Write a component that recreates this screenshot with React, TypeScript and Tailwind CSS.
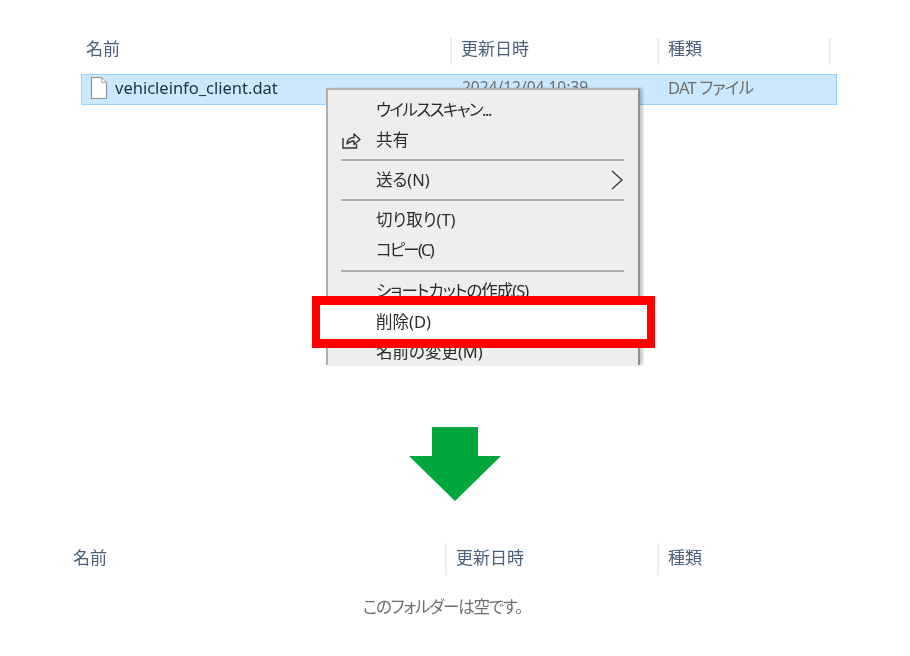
const font = "font-['Noto_Sans','Noto_Sans_CJK_JP',sans-serif] [font-feature-settings:'palt']";
const soft = 'blur-[0.4px]';

function HeaderCell({ label, className }: { label: string; className: string }) {
  return (
    <div className={`flex items-center h-full border-r-2 border-[#ececec] text-[#4c607a] text-[17px] ${className}`}>
      <span className={soft}>{label}</span>
    </div>
  );
}

function FileIcon() {
  return (
    <svg width="18" height="24" viewBox="0 0 18 24" className={`shrink-0 mb-[3px] ${soft}`}>
      <path d="M1.500 1.500h10l5 5v16h-15z" fill="#fff" stroke="#8f8f8f" strokeWidth="1.200" />
      <path d="M11.500 1.500v5h5" fill="#efefef" stroke="#b0b0b0" strokeWidth="1" />
    </svg>
  );
}

function ShareIcon() {
  return (
    <svg width="21" height="20" viewBox="0 0 20 20" fill="none" stroke="#333" strokeWidth="1.400" className={soft}>
      <path d="M1.500 8v10h13.500v-4" />
      <path d="M5.500 14c0-4.500 3-6.500 7-6.500v-3.500l6 5.500-6 5v-3.500c-3 0-5 1-7 3z" strokeLinejoin="round" />
    </svg>
  );
}

function MenuItem({ label, h = 'h-[30px]', track = '', icon, arrow }: { label: string; h?: string; track?: string; icon?: boolean; arrow?: boolean }) {
  return (
    <div className={`flex items-center ${h} text-[#2b2b2b] text-[16.5px] leading-none`}>
      <div className="w-[48px] pl-[13px] shrink-0 flex items-center">{icon && <ShareIcon />}</div>
      <span className={`flex-1 whitespace-nowrap ${track} ${soft}`}>{label}</span>
      {arrow && (
        <svg width="14" height="22" viewBox="0 0 14 22" fill="none" stroke="#444" strokeWidth="1.500" className={`mr-[14px] ${soft}`}>
          <path d="M2 2l10 9-10 9" />
        </svg>
      )}
    </div>
  );
}

function Separator() {
  return <div className="h-[2px] bg-[#adadad] ml-[13px] mr-[14px] my-[4px]" />;
}

function ContextMenu() {
  return (
    <div className="absolute left-[326px] top-[88px] w-[314px] h-[277px] overflow-hidden bg-[#eeeeee] border-l-2 border-t-2 border-[#b0b0b0] border-r-2 border-r-[#909090] pt-[5px] shadow-[3px_0_2px_rgba(0,0,0,0.2)]">
      <MenuItem label="ウイルススキャン..." track="tracking-[-1.500px]" />
      <MenuItem label="共有" icon />
      <Separator />
      <MenuItem label="送る(N)" arrow />
      <Separator />
      <MenuItem label="切り取り(T)" />
      <MenuItem label="コピー(C)" h="h-[31px]" track="tracking-[-1.800px]" />
      <Separator />
      <MenuItem label="ショートカットの作成(S)" track="tracking-[-1px]" />
      <MenuItem label="削除(D)" h="h-[31px]" />
      <MenuItem label="名前の変更(M)" h="h-[31px]" />
    </div>
  );
}

export default function App() {
  return (
    <div className={`relative w-[910px] h-[656px] bg-white overflow-hidden ${font}`}>
      {/* Before */}
      <div className="pt-[38px] pl-[81px] w-[837px]">
        <div className="flex h-[27px]">
          <HeaderCell label="名前" className="w-[371px] pl-[5px] pb-[5px]" />
          <HeaderCell label="更新日時" className="w-[207px] pl-[9px] pb-[5px]" />
          <HeaderCell label="種類" className="w-[172px] pl-[9px] pb-[5px]" />
        </div>
        <div className="flex items-center h-[31px] mt-[9px] w-[756px] bg-[#cce8ff] border border-[#99d1ff]">
          <div className="flex items-center w-[371px] pl-[8px] gap-[7px] text-[#1f2f3f] text-[16.500px]">
            <FileIcon />
            <span className={`pb-[3px] ${soft}`}>vehicleinfo_client.dat</span>
          </div>
          <div className={`w-[207px] pl-[9px] text-[#6d6d6d] text-[15.500px] pb-[3px] ${soft}`}>2024/12/04 10:39</div>
          <div className={`pl-[8px] text-[#6d6d6d] text-[16.500px] tracking-[-0.800px] pb-[3px] ${soft}`}>DAT ファイル</div>
        </div>
      </div>

      <ContextMenu />

      {/* Highlight */}
      <div className="absolute left-[312px] top-[296px] w-[343px] h-[52px] border-x-[8px] border-y-[9px] border-[#ff0000]">
        <div className="w-full h-full bg-white flex items-center pl-[56px] text-[#2b2b2b] text-[16.500px] leading-none">
          <span className={soft}>削除(D)</span>
        </div>
      </div>

      {/* Arrow */}
      <div className="absolute left-0 top-[427px] w-full flex justify-center">
        <svg width="92" height="74" viewBox="0 0 92 74">
          <path d="M23 0h46v29h23L46 74 0 29h23z" fill="#00a73c" />
        </svg>
      </div>

      {/* After */}
      <div className="absolute left-[68px] top-[543px]">
        <div className="flex h-[32px]">
          <HeaderCell label="名前" className="w-[379px] pl-[5px] pb-[2px]" />
          <HeaderCell label="更新日時" className="w-[212px] pl-[9px] pb-[2px]" />
          <div className="flex items-center pl-[9px] pb-[2px] text-[#4c607a] text-[17px]">
            <span className={soft}>種類</span>
          </div>
        </div>
      </div>
      <div className="absolute left-0 top-[595px] w-[885px] text-center text-[#6d6d6d] text-[16.500px] tracking-[-1.200px]">
        <span className={soft}>このフォルダーは空です。</span>
      </div>
    </div>
  );
}
